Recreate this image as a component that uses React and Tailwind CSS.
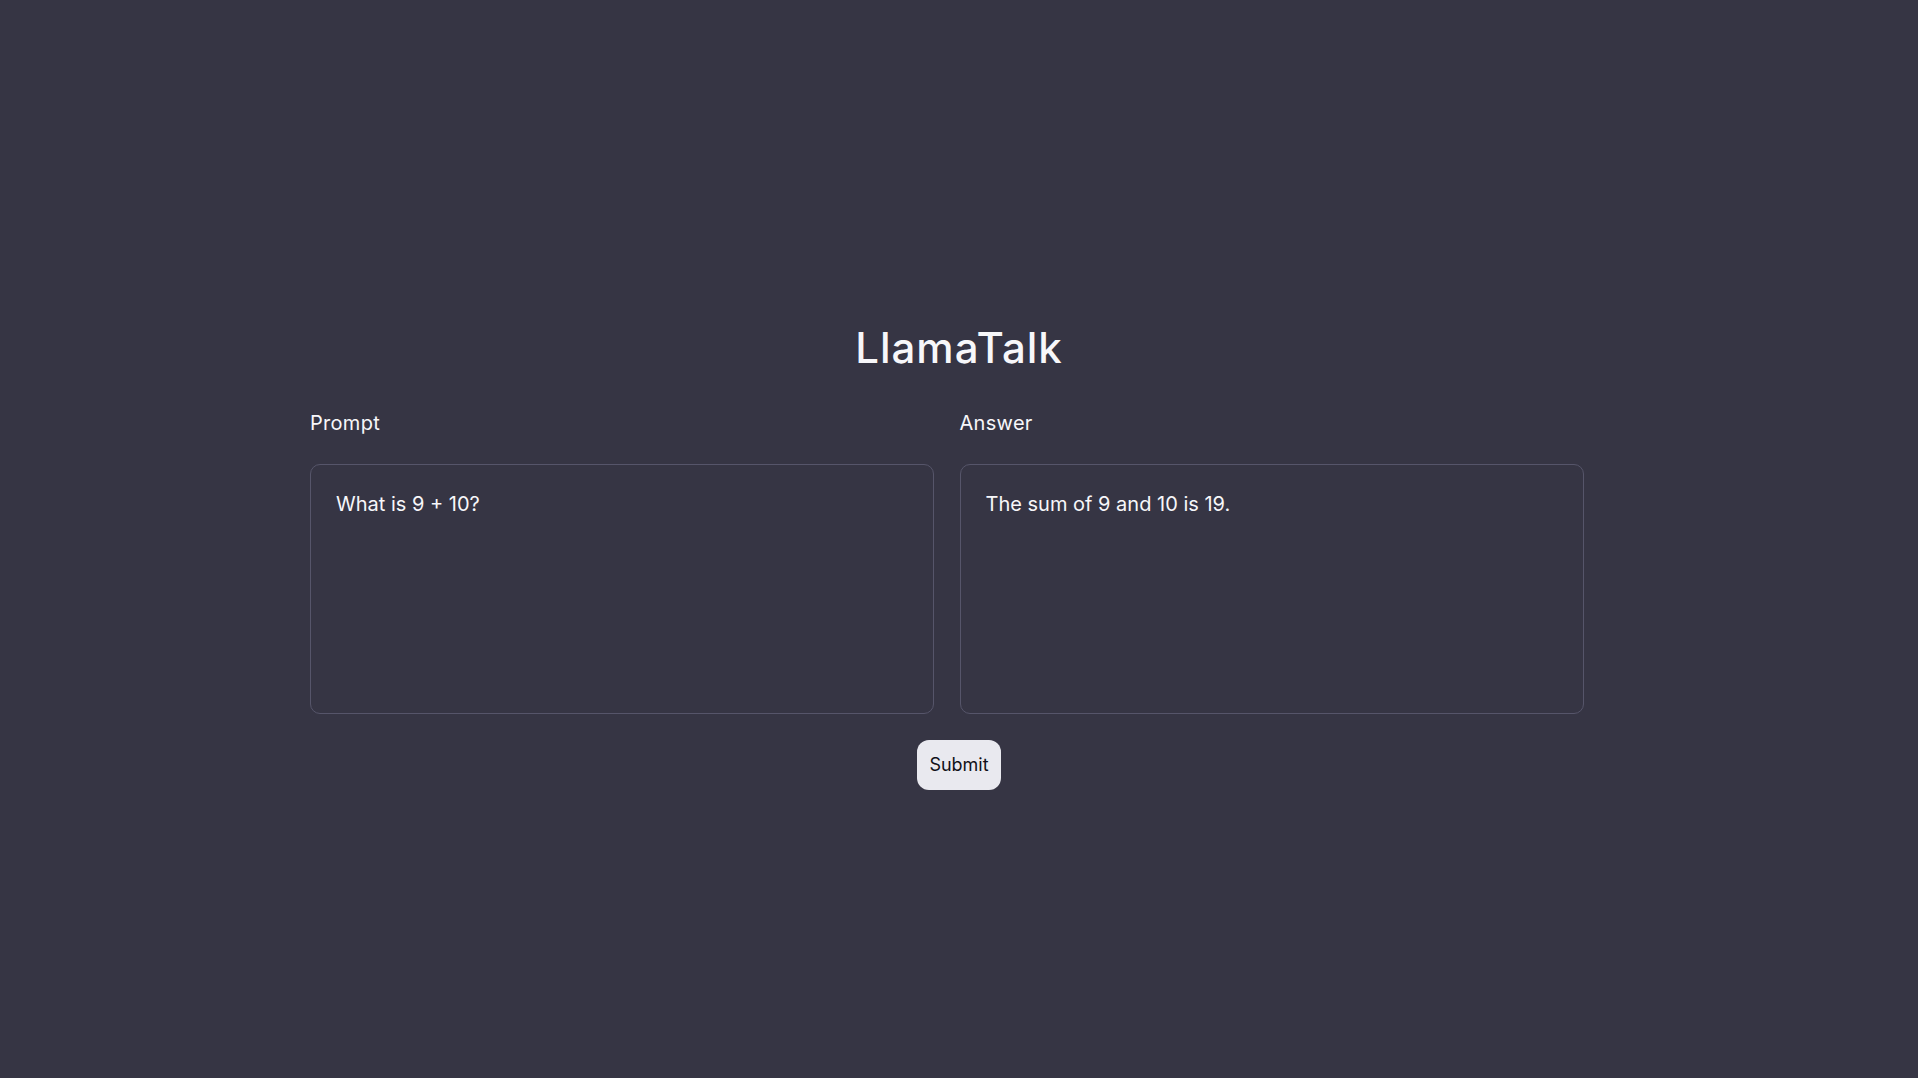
export default function App() {
  const font = { fontFamily: 'Inter, "Open Sans", sans-serif' }
  return (
    <div className="min-h-screen w-full bg-[#363544] text-[#f7f7fa] flex flex-col items-center pt-[323px]" style={font}>
      <h1 className="text-[42px] leading-[50px] font-medium tracking-[1px]">LlamaTalk</h1>
      <div className="grid grid-cols-2 w-[1300px] mt-[36px] pl-[1px]">
        <Field label="Prompt" value="What is 9 + 10?" />
        <Field label="Answer" value="The sum of 9 and 10 is 19." />
      </div>
      <button className="mt-[26px] h-[50px] px-[12px] rounded-[12px] bg-[#e9e9ef] text-[#111118] text-[18px] leading-none">
        Submit
      </button>
    </div>
  )
}

function Field({ label, value }) {
  return (
    <div className="flex flex-col">
      <label className="text-[20px] leading-7 mb-[27px] tracking-[0.3px]">{label}</label>
      <textarea
        readOnly
        defaultValue={value}
        className="w-[624px] h-[250px] resize-none bg-transparent border border-[#56556a] rounded-[10px] pt-[25px] pl-[25px] pr-6 text-[20px] leading-7 text-[#f7f7fa] outline-none"
      />
    </div>
  )
}
